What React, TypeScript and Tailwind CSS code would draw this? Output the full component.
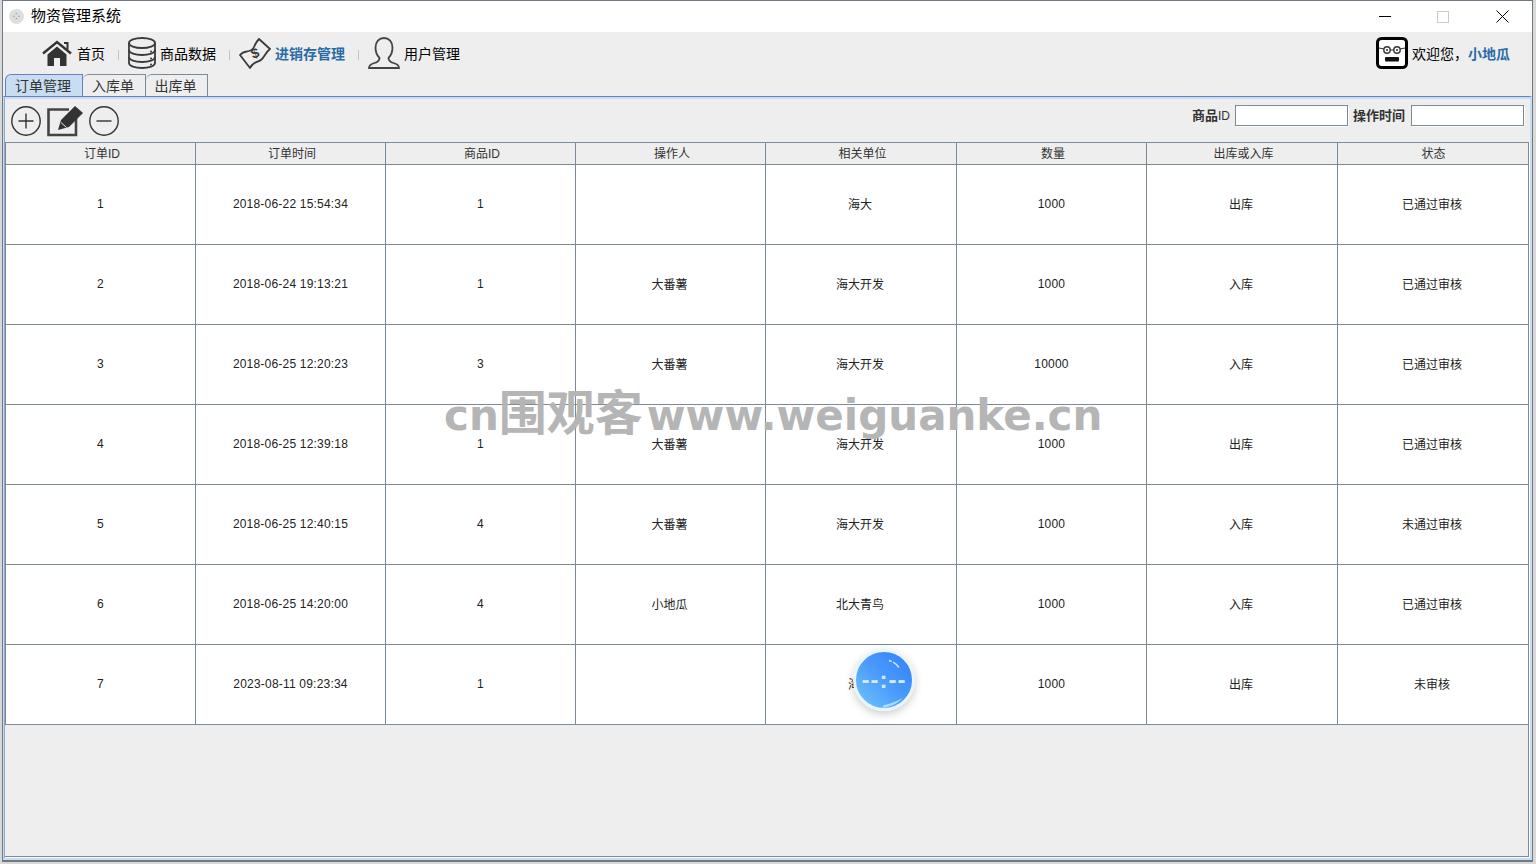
const font = { fontFamily: '"Liberation Sans", "Noto Sans CJK SC", sans-serif' };

const cols = ["订单ID", "订单时间", "商品ID", "操作人", "相关单位", "数量", "出库或入库", "状态"];
const rows = [
  ["1", "2018-06-22 15:54:34", "1", "", "海大", "1000", "出库", "已通过审核"],
  ["2", "2018-06-24 19:13:21", "1", "大番薯", "海大开发", "1000", "入库", "已通过审核"],
  ["3", "2018-06-25 12:20:23", "3", "大番薯", "海大开发", "10000", "入库", "已通过审核"],
  ["4", "2018-06-25 12:39:18", "1", "大番薯", "海大开发", "1000", "出库", "已通过审核"],
  ["5", "2018-06-25 12:40:15", "4", "大番薯", "海大开发", "1000", "入库", "未通过审核"],
  ["6", "2018-06-25 14:20:00", "4", "小地瓜", "北大青鸟", "1000", "入库", "已通过审核"],
  ["7", "2023-08-11 09:23:34", "1", "", "海大", "1000", "出库", "未审核"],
];

const gridCols = "grid grid-cols-[191px_190px_190px_190px_191px_190px_191px_191px]";

function HomeIcon() {
  return (
    <svg width="30" height="27" viewBox="0 0 30 27" fill="none">
      <path d="M1 13.5 15 2l14 11.5" stroke="#333" strokeWidth="2.4" />
      <path d="M22 3h3.5v6.5" stroke="#333" strokeWidth="2" />
      <path d="M5.5 14.5 15 6.5l9.5 8V26H18v-8h-6v8H5.5Z" fill="#333" />
    </svg>
  );
}

function DbIcon() {
  return (
    <svg width="28" height="32" viewBox="0 0 28 32" fill="none" stroke="#3a3a3a" strokeWidth="1.8">
      <ellipse cx="14" cy="6" rx="13" ry="5" />
      <path d="M1 6v20c0 3 6 5 13 5s13-2 13-5V6" />
      <path d="M1 13c0 3 6 5 13 5s13-2 13-5" />
      <path d="M1 20c0 3 6 5 13 5s13-2 13-5" />
      <path d="M23 14.500v.1M23 21.500v.1M23 27.500v.1" strokeWidth="2" strokeLinecap="round" />
    </svg>
  );
}

function MoneyIcon() {
  return (
    <svg width="32" height="32" viewBox="0 0 32 32" fill="none">
      <path
        d="M1 18C6 12 12 17 15 10 16.500 6 18 4 20 2L31 12C27 15 26 19 23 22 19 26 14 24 11 31Z"
        stroke="#3a3a3a"
        strokeWidth="1.800"
        strokeLinejoin="round"
      />
      <text x="16" y="21" textAnchor="middle" fontSize="14" fontWeight="700" fill="#3a3a3a" transform="rotate(-20 16 16)" style={font}>
        $
      </text>
    </svg>
  );
}

function UserIcon() {
  return (
    <svg width="32" height="32" viewBox="0 0 32 32" fill="none" stroke="#444" strokeWidth="1.8">
      <path d="M11.500 21C8.500 18 7.500 14 7.500 10.500 7.500 5 11 1 16 1s8.500 4 8.500 9.500c0 3.500-1 7.500-4 10.500 0 3 1.500 4 5 5 3 .8 5.500 2 5.500 5H1c0-3 2.500-4.200 5.500-5 3.500-1 5-2 5-5Z" />
    </svg>
  );
}

function FaceIcon() {
  return (
    <svg width="32" height="32" viewBox="0 0 32 32" fill="none">
      <rect x="1.500" y="1.500" width="29" height="29" rx="4" fill="#fff" stroke="#000" strokeWidth="3" />
      <circle cx="11" cy="13" r="3.200" stroke="#333" strokeWidth="1.400" />
      <circle cx="21" cy="13" r="3.200" stroke="#333" strokeWidth="1.400" />
      <circle cx="11" cy="13" r="1" fill="#333" />
      <circle cx="21" cy="13" r="1" fill="#333" />
      <path d="M3 11l5 1M29 11l-5 1M14 13h4" stroke="#333" strokeWidth="1.200" />
      <rect x="9" y="20" width="14" height="4.500" rx="1" fill="#111" />
    </svg>
  );
}

function PlusCircle() {
  return (
    <svg width="30" height="30" viewBox="0 0 30 30" fill="none" stroke="#333" strokeWidth="1.400">
      <circle cx="15" cy="15" r="14.200" />
      <path d="M15 7.500v15M7.500 15h15" />
    </svg>
  );
}

function MinusCircle() {
  return (
    <svg width="30" height="30" viewBox="0 0 30 30" fill="none" stroke="#333" strokeWidth="1.400">
      <circle cx="15" cy="15" r="14.200" />
      <path d="M7.500 15h15" />
    </svg>
  );
}

function EditIcon() {
  return (
    <svg width="36" height="32" viewBox="0 0 36 32" fill="none">
      <path d="M22 4.500H1.500V30H29V13" stroke="#444" strokeWidth="2.600" />
      <path d="M11 25 14 15 28 1l8 7-14 14Z" fill="#333" />
      <path d="M14 17.500 19.500 22.500" stroke="#eee" strokeWidth="1" />
    </svg>
  );
}

function NavItem({ icon, label, active }: { icon: React.ReactNode; label: string; active?: boolean }) {
  return (
    <div className="flex items-center gap-[4px]">
      {icon}
      <span className={active ? "pt-[2px] text-[14px] font-bold text-[#2a6aa5]" : "pt-[2px] text-[14px] text-black"}>{label}</span>
    </div>
  );
}

function Sep() {
  return <div className="mt-[3px] mr-[9px] ml-[13px] h-[10px] w-px bg-[#c4c4c4]" />;
}

export default function App() {
  return (
    <div className="relative h-[864px] w-[1536px] overflow-hidden bg-[#d9d9d9] pl-[2px] text-black" style={font}>
      <div className="flex h-[862px] w-[1531px] flex-col border border-b-2 border-[#6f7a85] bg-[#eeeeee]">
        {/* title bar */}
        <div className="flex h-[31px] shrink-0 items-center bg-white pl-[6px]">
          <div className="flex h-[15px] w-[15px] items-center justify-center rounded-full bg-[#dedede] text-[8px] leading-none text-[#444]">⁘</div>
          <span className="ml-[7px] text-[15px] text-black">物资管理系统</span>
          <div className="ml-auto flex items-center">
            <div className="h-px w-[12px] bg-black" />
            <div className="ml-[46px] h-[12px] w-[12px] border border-[#cccccc]" />
            <svg className="mr-[23px] ml-[47px]" width="13" height="13" viewBox="0 0 13 13" stroke="#000" strokeWidth="1">
              <path d="M.5.500l12 12M12.500.500l-12 12" />
            </svg>
          </div>
        </div>

        {/* nav */}
        <div className="flex h-[42px] shrink-0 items-center pl-[39px]">
          <NavItem icon={<span className="mr-px block"><HomeIcon /></span>} label="首页" />
          <Sep />
          <NavItem icon={<DbIcon />} label="商品数据" />
          <Sep />
          <NavItem icon={<MoneyIcon />} label="进销存管理" active />
          <Sep />
          <NavItem icon={<UserIcon />} label="用户管理" />
          <div className="ml-auto flex items-center pr-[22px]">
            <FaceIcon />
            <span className="ml-[4px] pt-[2px] text-[14px] text-black">欢迎您，</span>
            <span className="pt-[2px] text-[14px] font-bold text-[#2a6aa5]">小地瓜</span>
          </div>
        </div>

        {/* tabs */}
        <div className="flex h-[22px] shrink-0 items-end pl-[2px] text-[14px] text-[#333]">
          <div className="flex h-[22px] w-[78px] items-center justify-center rounded-tl-[6px] border border-b-0 border-[#6382bf] bg-[#c8ddf2] pt-[2px] pr-[2px]">订单管理</div>
          <div className="flex h-[22px] w-[63px] items-center justify-center rounded-tl-[6px] border border-b-0 border-l-0 border-[#7a8a99] pt-[2px] pr-[2px]">入库单</div>
          <div className="flex h-[22px] w-[62px] items-center justify-center rounded-tl-[6px] border border-b-0 border-l-0 border-[#7a8a99] pt-[2px] pr-[2px]">出库单</div>
        </div>

        {/* tab content */}
        <div className="flex min-h-0 flex-1 flex-col border-t border-r-2 border-b-2 border-l border-[#c8ddf2] border-t-[#6382bf]">
          <div className="flex min-h-0 flex-1 flex-col border-t-2 border-l border-[#c8ddf2] border-l-[#8fa8cc]">
            {/* toolbar */}
            <div className="flex h-[43px] shrink-0 items-center pl-[6px]">
              <PlusCircle />
              <div className="ml-[6px]">
                <EditIcon />
              </div>
              <div className="ml-[6px]">
                <MinusCircle />
              </div>
              <div className="mt-[6px] ml-auto flex items-center self-start pr-[6px] text-[13px] leading-none font-bold text-[#333]">
                <span>
                  商品<span className="text-[12px] font-normal">ID</span>
                </span>
                <div className="ml-[5px] h-[21px] w-[113px] border border-[#7a8a99] bg-white shadow-[1px_1px_0_#fff]" />
                <span className="ml-[5px]">操作时间</span>
                <div className="ml-[6px] h-[21px] w-[113px] border border-[#7a8a99] bg-white shadow-[1px_1px_0_#fff]" />
              </div>
            </div>

            {/* table */}
            <div className="flex min-h-0 w-[1525px] flex-1 flex-col border-r border-b border-white">
              <div className="min-h-0 flex-1 border-r border-b border-[#7a8a99]">
                <div className={`${gridCols} -mr-px h-[23px] border-y border-[#7a8a99]`}>
                  {cols.map((c, i) => (
                    <div
                      key={c}
                      className={`flex items-center justify-center border-r border-[#7a8a99] pt-[1px] ${i === 7 ? "pl-[1px]" : "pl-[3px]"} text-[12px] text-[#333] ${i === 0 ? "border-l" : ""}`}
                    >
                      {c}
                    </div>
                  ))}
                </div>
                {rows.map((r) => (
                  <div key={r[0]} className={`${gridCols} -mr-px h-[80px] border-b border-[#7a8a99] bg-white`}>
                    {r.map((v, i) => (
                      <div
                        key={i}
                        className={`flex items-center justify-center border-r border-[#7a8a99] text-[12px] text-[#222] ${i === 0 ? "border-l" : ""}`}
                      >
                        {/^[\d: -]+$/.test(v) ? <span className="-mt-[1px] tracking-[0.2px]">{v}</span> : <span className="pr-[2px]">{v}</span>}
                      </div>
                    ))}
                  </div>
                ))}
              </div>
            </div>
          </div>
        </div>
      </div>

      {/* watermark */}
      <div className="pointer-events-none absolute top-[383px] left-[444px] whitespace-nowrap text-[42px] leading-[60px] font-bold text-[#b5b5b5]" style={{ fontFamily: '"DejaVu Sans", "Noto Sans CJK SC", sans-serif' }}>
        cn<span className="mr-[4px] text-[48px]">围观客</span>www.weiguanke.cn
      </div>

      {/* floating clock */}
      <div className="absolute top-[649px] left-[853px] flex h-[62px] w-[62px] items-center justify-center overflow-hidden rounded-full border-[3px] border-[#eaf4fd] bg-gradient-to-bl from-[#2f7ffb] via-[#4a9bfb] to-[#70c6ff] shadow-[0_3px_8px_rgba(0,0,0,0.2)]">
        <span className="text-[24px] leading-none font-bold tracking-[1px] text-[#d8e8fb]">--:--</span>
        <svg className="absolute inset-0" width="56" height="56" viewBox="0 0 56 56" fill="none">
          <path d="M33 8.500c4 1 7.500 3.500 10 7" stroke="#d8e8fb" strokeWidth="1.300" strokeDasharray="3 1.500 9" />
          <path d="M26 56c8-1 15-4 21-10-6 3-13 6-19 7Z" fill="#a8dcff" />
        </svg>
      </div>
    </div>
  );
}
